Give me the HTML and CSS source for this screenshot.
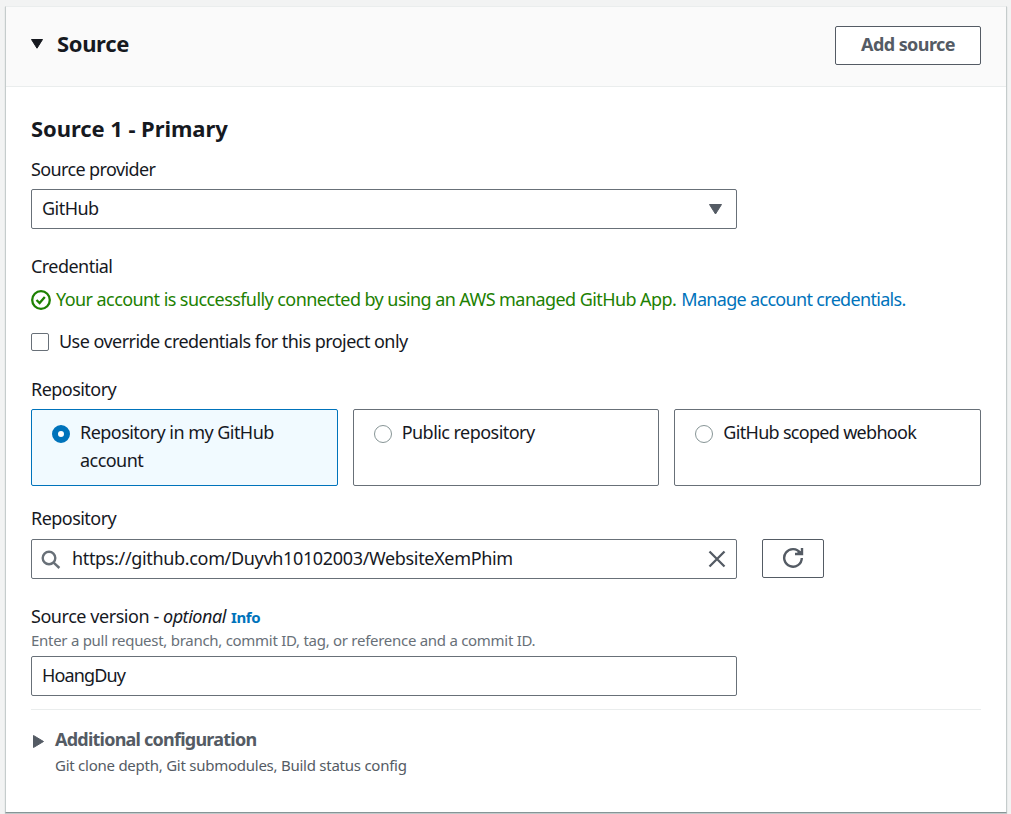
FILE: index.html
```html
<!DOCTYPE html>
<html lang="en">
<head>
<meta charset="utf-8">
<title>Source</title>
<link rel="stylesheet" href="styles.css">
</head>
<body>
<section class="panel">
  <header class="panel-header">
    <svg class="caret-down" viewBox="0 0 12 10"><path d="M.5.5h11L6 9.200z"/></svg>
    <h2>Source</h2>
    <button class="button add">Add source</button>
  </header>
  <div class="panel-body">
    <h3>Source 1 - Primary</h3>
    <div class="label provider-label">Source provider</div>
    <div class="field select"><span>GitHub</span><svg class="select-caret" viewBox="0 0 13 11"><path d="M.5.5h12L6.5 10z"/></svg></div>
    <div class="label credential-label">Credential</div>
    <p class="status"><svg class="check" viewBox="0 0 20 20"><circle cx="10" cy="10" r="8.8"/><path d="M5.500 10l3.100 3 5.200-6"/></svg><span class="success">Your account is successfully connected by using an AWS managed GitHub App.</span><a class="manage">Manage account credentials.</a></p>
    <div class="override"><span class="checkbox"></span><span>Use override credentials for this project only</span></div>
    <div class="label repository-label">Repository</div>
    <div class="tiles">
      <div class="tile selected"><span class="radio"></span><span class="tile-text">Repository in my GitHub account</span></div>
      <div class="tile"><span class="radio"></span><span class="tile-text">Public repository</span></div>
      <div class="tile"><span class="radio"></span><span class="tile-text webhook">GitHub scoped webhook</span></div>
    </div>
    <div class="label url-label">Repository</div>
    <div class="search-row">
      <div class="field search"><svg class="magnifier" viewBox="0 0 20 20"><circle cx="8" cy="8" r="6.3"/><path d="M12.600 12.600l5.800 5.400"/></svg><span class="url">https://github.com/Duyvh10102003/WebsiteXemPhim</span><svg class="clear" viewBox="0 0 18 18"><path d="M1.500 1.500l15 15M16.500 1.500l-15 15"/></svg></div>
      <button class="button refresh" aria-label="Refresh"><svg class="refresh-icon" viewBox="0 0 22 22"><path d="M18.300 6A8.800 8.800 0 1 0 19.800 11"/><path d="M20 1v6h-7M15.500 6.500L19 5"/></svg></button>
    </div>
    <div class="label version-label"><span class="version-text">Source version - <em>optional</em></span><a class="info">Info</a></div>
    <p class="hint">Enter a pull request, branch, commit ID, tag, or reference and a commit ID.</p>
    <div class="field version"><span>HoangDuy</span></div>
    <div class="additional">
      <svg class="caret-right" viewBox="0 0 11 13"><path d="M.5.500l10 6-10 6z"/></svg>
      <div><h4>Additional configuration</h4><p class="summary">Git clone depth, Git submodules, Build status config</p></div>
    </div>
  </div>
</section>
</body>
</html>
```
FILE: styles.css
```css
* { box-sizing: border-box; }
body { margin: 0; padding: 6px 4px 1px 5px; height: 814px; overflow: hidden; background: #f2f3f3; color: #16191f; font: 18px/28px "Noto Sans", sans-serif; letter-spacing: -.54px; }
h2, h3, h4, p { margin: 0; }
svg { display: block; flex: none; }

.panel { height: 807px; background: #fff; border: 1px solid #c5cccc; border-top-color: #eaeded; border-bottom-color: #879596; box-shadow: 0 1px 1px rgba(0, 28, 36, .2); }
.panel-header { height: 80px; padding: 19px 25px 0; display: flex; align-items: flex-start; background: #fafafa; border-bottom: 1px solid #eaeded; }
.caret-down { width: 12px; height: 10px; margin: 13px 14px 0 0; fill: #16191f; stroke: #16191f; stroke-linejoin: round; }
h2 { flex: 1; font-size: 22px; line-height: 34px; letter-spacing: -.35px; }

.button { border: 1px solid #545b64; border-radius: 2px; background: #fff; color: #545b64; font: bold 18px/28px "Noto Sans", sans-serif; padding: 0; }
.add { width: 146px; height: 39px; padding-bottom: 3px; letter-spacing: -.57px; }

.panel-body { padding: 27px 25px 0; }
h3 { font-size: 22px; letter-spacing: -.07px; }
.label { height: 28px; }
.provider-label { margin: 13px 0 6px; letter-spacing: -.62px; }
.field { width: 706px; height: 40px; border: 1px solid #687078; border-radius: 2px; padding: 0 10px 2px; display: flex; align-items: center; }
.select { padding: 0 14px 3px 10px; justify-content: space-between; }
.select-caret { width: 13px; height: 11px; margin-top: 3px; fill: #545b64; stroke: #545b64; stroke-linejoin: round; }

.credential-label { margin: 23px 0 5px; }
.status { display: flex; align-items: center; white-space: nowrap; }
.check { width: 20px; height: 20px; margin: 2px 5px 0 0; fill: none; stroke: #1d8102; stroke-width: 2.3; }
.success { color: #1d8102; letter-spacing: -.575px; }
a { color: #0073bb; }
.manage { margin-left: 5px; letter-spacing: -.68px; }
.override { display: flex; align-items: center; margin-top: 14px; }
.checkbox { width: 18px; height: 18px; margin: 2px 10px 0 0; border: 1px solid #687078; border-radius: 2px; }

.repository-label { margin: 20px 0 6px; }
.tiles { display: flex; gap: 15px; }
.tile { flex: 1 1 0; height: 77px; padding: 8px 20px; display: flex; border: 1px solid #687078; border-radius: 2px; }
.selected { background: #f1faff; border-color: #0073bb; }
.radio { flex: none; width: 18px; height: 18px; margin: 7px 10px 0 0; border: 1px solid #879596; border-radius: 50%; background: #fff; }
.selected .radio { border: 6px solid #0073bb; }
.tile-text { max-width: 220px; }
.webhook { letter-spacing: -.7px; }

.url-label { margin: 18px 0 7px; }
.search-row { display: flex; gap: 25px; }
.search { padding-left: 9px; }
.magnifier { width: 20px; height: 20px; margin: 3px 11px 0 0; fill: none; stroke: #687078; stroke-width: 2.4; }
.url { flex: 1; letter-spacing: -.34px; }
.clear { width: 18px; height: 18px; margin-top: 2px; fill: none; stroke: #545b64; stroke-width: 2.3; }
.refresh { width: 62px; height: 39px; display: flex; align-items: center; justify-content: center; padding-bottom: 1px; }
.refresh-icon { width: 22px; height: 22px; fill: none; stroke: #545b64; stroke-width: 2.4; }

.version-label { margin-top: 23px; display: flex; align-items: center; }
.version-text { letter-spacing: -.45px; }
.info { margin: 2px 0 0 5px; font-size: 15px; font-weight: bold; letter-spacing: -.4px; }
.hint { font-size: 15px; line-height: 20px; color: #687078; letter-spacing: -.28px; }
.version { margin-top: 6px; letter-spacing: -.85px; }
.additional { margin-top: 13px; border-top: 1px solid #eaeded; padding-top: 15px; display: flex; color: #545b64; }
.caret-right { width: 11px; height: 13px; margin: 10px 11px 0 2px; fill: #545b64; stroke: #545b64; stroke-linejoin: round; }
h4 { font-size: 18px; letter-spacing: -.77px; }
.summary { font-size: 15px; line-height: 24px; letter-spacing: -.25px; }
```
